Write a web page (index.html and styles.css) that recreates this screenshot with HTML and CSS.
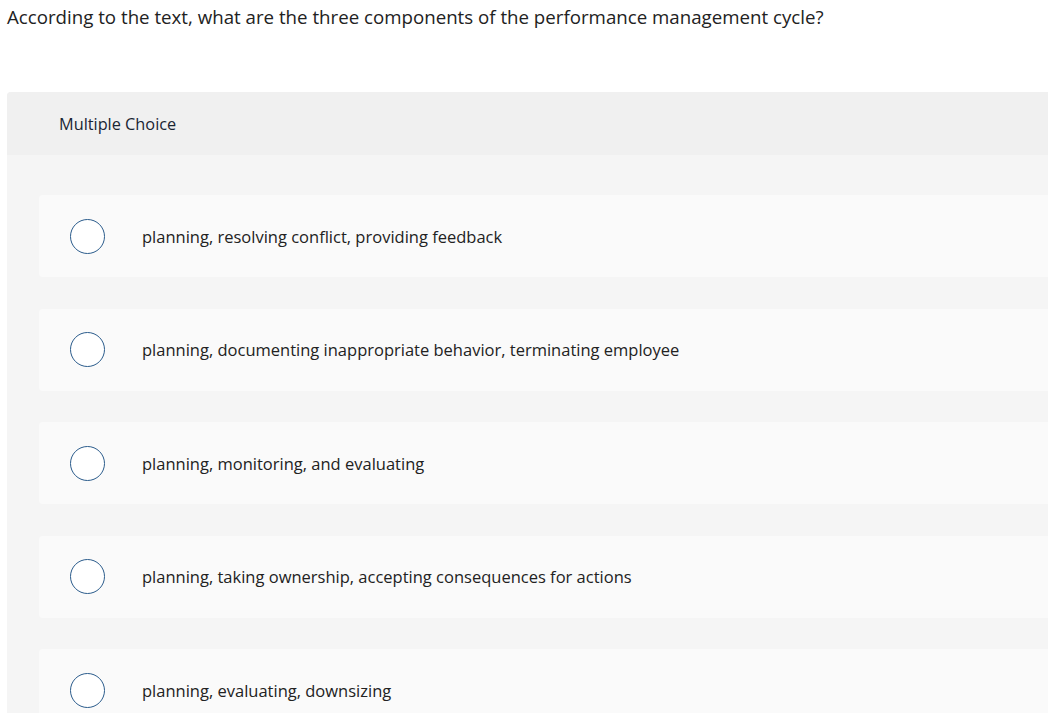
FILE: index.html
```html
<!DOCTYPE html>
<html>
<head>
<meta charset="utf-8">
<link rel="stylesheet" href="styles.css">
</head>
<body>
<main class="page">
<h1 class="question">According to the text, what are the three components of the performance management cycle?</h1>
<section class="panel">
  <div class="panel-head">Multiple Choice</div>
  <div class="panel-body">
    <div class="option"><span class="radio"></span><span class="label">planning, resolving conflict, providing feedback</span></div>
    <div class="option"><span class="radio"></span><span class="label">planning, documenting inappropriate behavior, terminating employee</span></div>
    <div class="option"><span class="radio"></span><span class="label">planning, monitoring, and evaluating</span></div>
    <div class="option"><span class="radio"></span><span class="label">planning, taking ownership, accepting consequences for actions</span></div>
    <div class="option"><span class="radio"></span><span class="label">planning, evaluating, downsizing</span></div>
  </div>
</section>
</main>
</body>
</html>
```
FILE: styles.css
```css
html, body {
  margin: 0;
  padding: 0;
  background: #fff;
  overflow: hidden;
}
body {
  font-family: "Open Sans", "Liberation Sans", sans-serif;
  color: #222;
}
.page {
  height: 713px;
  overflow: hidden;
}
.question {
  margin: 0;
  padding: 4px 0 0 7px;
  font-size: 18.7px;
  font-weight: 400;
  line-height: 26px;
  color: #222;
  height: 92px;
  box-sizing: border-box;
}
.panel {
  margin-left: 7px;
  background: #f5f5f5;
  border-top-left-radius: 4px;
  overflow: hidden;
}
.panel-head {
  background: #f0f0f0;
  height: 63px;
  display: flex;
  align-items: center;
  padding-left: 52px;
  font-size: 16.3px;
  color: #1a2533;
}
.panel-body {
  padding: 40px 0 40px 32px;
  display: flex;
  flex-direction: column;
  gap: 31.5px;
}
.option {
  background: #fafafa;
  height: 82px;
  border-radius: 4px 0 0 4px;
  display: flex;
  align-items: center;
  padding-left: 31px;
}
.radio {
  width: 33px;
  height: 33px;
  border: 1.5px solid #2b5c8c;
  border-radius: 50%;
  background: #fff;
  flex: none;
}
.label {
  margin-left: 37px;
  font-size: 16.5px;
  color: #222;
}
```
